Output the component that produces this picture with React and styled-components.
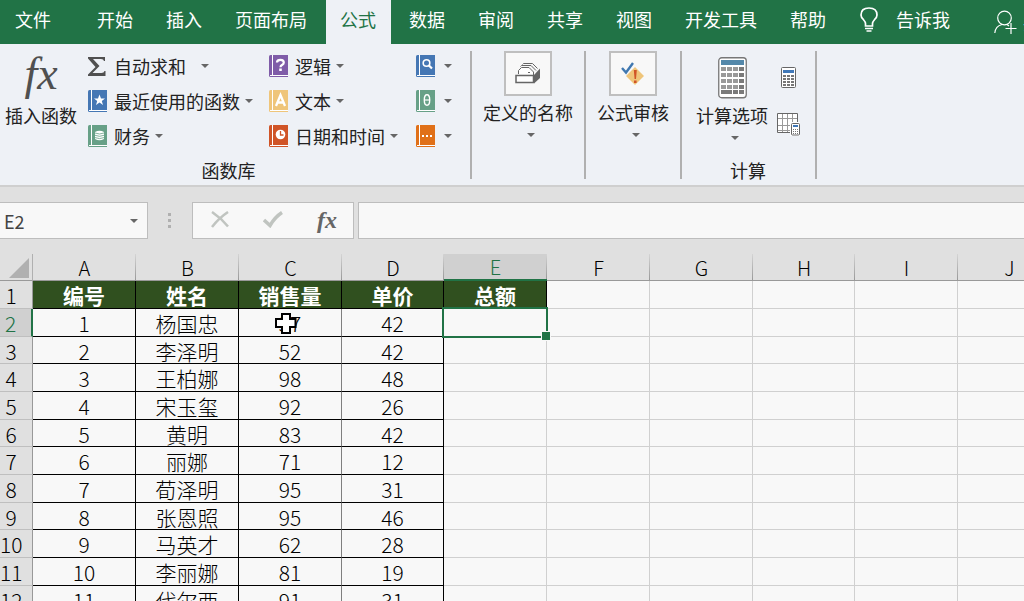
import React, { useState } from 'react';
import styled, { createGlobalStyle, css } from 'styled-components';

const GlobalStyle = createGlobalStyle`
  * {
    box-sizing: border-box;
  }
  body {
    margin: 0;
    background: #e0e0e0;
    font-family: "Noto Sans CJK SC", "Noto Sans", sans-serif;
    font-size: 18px;
    line-height: 26px;
    color: #222222;
  }
  button, input {
    font: inherit;
    color: inherit;
    padding: 0;
    border: none;
    background: none;
  }
  button {
    cursor: pointer;
  }
  svg {
    display: block;
    flex-shrink: 0;
  }
`;

const Page = styled.div`
  display: flex;
  flex-direction: column;
  height: 100vh;
  overflow: hidden;
`;

/* menu */
const MenuBar = styled.nav`
  display: flex;
  flex-shrink: 0;
  gap: 4px;
  height: 44px;
  padding-left: 1px;
  background: #217346;
  color: #ffffff;
  overflow: hidden;
`;

const MenuTab = styled.button`
  flex-shrink: 0;
  padding: 0 15px 6px 14px;
  white-space: nowrap;
  ${({ $first }) => $first && css`
    margin-right: 13px;
  `}
  ${({ $active }) => $active && css`
    background: #eef1f6;
    color: #217346;
  `}
`;

const MenuIconButton = styled.button`
  display: flex;
  flex-shrink: 0;
  align-items: center;
  gap: 18px;
  margin-left: 15px;
  padding-bottom: 6px;
  white-space: nowrap;
`;

const ShareButton = styled(MenuIconButton)`
  gap: 6px;
  margin-left: 40px;
  padding-bottom: 0;
`;

/* ribbon */
const Ribbon = styled.div`
  display: flex;
  flex-shrink: 0;
  height: 143px;
  padding: 7px 0 6px;
  background: #eef1f6;
  border-bottom: 2px solid #cfcfcf;
`;

const Group = styled.section`
  display: flex;
  flex-direction: column;
  flex-shrink: 0;
  justify-content: space-between;
  padding: ${({ $pad }) => $pad || '0 11px'};
  border-right: 2px solid #b0b0b0;
`;

const GroupBody = styled.div`
  display: flex;
  align-items: flex-start;
`;

const GroupLabel = styled.div`
  height: 22px;
  text-align: center;
`;

const BigButton = styled.button`
  display: flex;
  flex-direction: column;
  align-items: center;
  white-space: nowrap;
  padding-top: ${({ $bare }) => ($bare ? 6 : 0)}px;
`;

const BigIcon = styled.span`
  display: flex;
  align-items: center;
  justify-content: center;
  height: 42px;
  margin-bottom: 3px;
  ${({ $boxed }) => $boxed && css`
    width: 48px;
    height: 45px;
    background: #f8f8f8;
    border: 2px solid #bfbfbf;
  `}
`;

const BigFx = styled.span`
  align-self: flex-start;
  font: italic 46px/34px "Liberation Serif", serif;
  color: #505050;
`;

const Caret = styled.span`
  flex-shrink: 0;
  border: 4px solid transparent;
  border-top-color: #666666;
  border-bottom: none;
  ${({ $below }) => $below && css`
    margin-top: 8px;
    margin-left: 6px;
  `}
  ${({ $far }) => $far && css`
    margin-left: 10px;
  `}
`;

const Columns = styled.div`
  display: flex;
  gap: 16px;
  margin-left: 11px;
`;

const SmallButton = styled.button`
  display: flex;
  align-items: center;
  gap: 5px;
  height: 35px;
  padding-bottom: 5px;
  white-space: nowrap;
`;

const IconSlot = styled.span`
  display: flex;
  width: 21px;
`;

const Column = styled.div`
  display: flex;
  flex-direction: column;
  ${({ $compact }) => $compact && css`
    margin-left: 2px;
    ${SmallButton} {
      gap: 7px;
    }
  `}
`;

const ToolColumn = styled.div`
  display: flex;
  flex-direction: column;
  align-items: center;
  gap: 25px;
  margin-left: 9px;
  padding-top: 16px;
`;

/* formula bar */
const FormulaBar = styled.div`
  display: flex;
  flex-shrink: 0;
  align-items: center;
  height: 67px;
`;

const barBox = css`
  display: flex;
  align-items: center;
  height: 37px;
  background: #f8f8f8;
  border: 1px solid #bdbdbd;
`;

const NameBox = styled.div`
  ${barBox}
  width: 148px;
  padding: 0 9px 0 4px;
  border-left: none;
  color: #444444;
  input {
    flex: 1;
    min-width: 0;
    outline: none;
  }
  button {
    display: flex;
  }
`;

const Dots = styled.span`
  display: flex;
  flex-direction: column;
  gap: 3px;
  margin: 0 21px 0 20px;
  i {
    width: 3px;
    height: 3px;
    background: #b0b0b0;
  }
`;

const BarActions = styled.div`
  ${barBox}
  justify-content: space-between;
  width: 162px;
  margin-right: 4px;
  padding: 0 16px 2px 18px;
`;

const SmallFx = styled.span`
  font: italic bold 24px/28px "Liberation Serif", serif;
  color: #666666;
`;

const FormulaInput = styled.input`
  && {
    ${barBox}
    flex: 1;
    min-width: 0;
    padding: 0 8px;
    border-right: none;
    outline: none;
  }
`;

/* sheet */
const Sheet = styled.div`
  flex: 1;
  min-height: 0;
  overflow: hidden;
`;

const Table = styled.table`
  width: 100%;
  table-layout: fixed;
  border-collapse: separate;
  border-spacing: 0;
  background: #f8f8f8;
  color: #000000;
  font-size: 21px;
  line-height: 24px;
  text-align: center;
  th, td {
    padding: 1px 0 0;
    white-space: nowrap;
  }
`;

const HeadRow = styled.tr`
  height: 27px;
`;

const Row = styled.tr`
  height: ${({ $short }) => ($short ? 27 : 28)}px;
`;

const Corner = styled.th`
  background: #e0e0e0;
  border-right: 1px solid #b0b0b0;
  border-bottom: 1px solid #999999;
  svg {
    margin-left: 9px;
  }
`;

const ColHead = styled.th`
  background: linear-gradient(#d4d4d4, #999999) right / 1px 100% no-repeat #e0e0e0;
  border-bottom: 1px solid #999999;
  font-size: 20px;
  font-weight: 300;
  ${({ $active }) => $active && css`
    background-color: #d0d0d0;
    border-bottom: 2px solid #217346;
    color: #217346;
  `}
`;

const RowHead = styled.th`
  && {
    padding-right: 10px;
  }
  background: #e0e0e0;
  border-right: 1px solid #999999;
  border-bottom: 1px solid #bfbfbf;
  font-weight: 300;
  ${({ $active }) => $active && css`
    background: #d0d0d0;
    border-right: 2px solid #217346;
    color: #217346;
  `}
`;

const Cell = styled.td`
  position: relative;
  border-right: 1px solid #d0d0d0;
  border-bottom: 1px solid #d0d0d0;
  font-weight: 300;
  ${({ $filled, $soft }) => $filled && css`
    border-right-color: ${$soft ? '#7f7f7f' : '#000000'};
    border-bottom-color: #000000;
  `}
  ${({ $title }) => $title && css`
    background: #30501f;
    color: #ffffff;
    font-weight: 700;
  `}
`;

const Selection = styled.span`
  position: absolute;
  inset: -2px;
  z-index: 1;
  border: 2px solid #217346;
  pointer-events: none;
  &::after {
    content: '';
    position: absolute;
    right: -5px;
    bottom: -5px;
    width: 8px;
    height: 8px;
    background: #217346;
    border: 1px solid #f8f8f8;
  }
`;

const Pointer = styled.svg`
  position: absolute;
  top: 4px;
  left: 36px;
`;

const BookIcon = ({ color, children }) => (
  <svg width="19" height="22" viewBox="0 0 19 22">
    <path d="M1.500 0H19V22H1.500Q0 22 0 20.500V1.500Q0 0 1.500 0Z" fill={color} />
    <path d="M3.500 0V20M1 20.500H19" stroke="#ffffff" fill="none" />
    {children}
  </svg>
);

const SigmaIcon = () => (
  <svg width="18" height="19" viewBox="0 0 18 19">
    <path d="M0 0H17V4H16Q15.500 2 13 2H5L11.500 9L4.500 16H13.500Q16 16 16.500 14H17.500V19H0V17.500L7.500 10L0 1.500Z" fill="#505050" />
  </svg>
);

const StarBook = () => (
  <BookIcon color="#4577b4">
    <path d="M11.500 4.500L13 8.500H17L13.800 11L15 15L11.500 12.600L8 15L9.200 11L6 8.500H10Z" fill="#ffffff" />
  </BookIcon>
);

const MoneyBook = () => (
  <BookIcon color="#67a087">
    <path d="M7 7V14Q11.500 16.500 16 14V7Q11.500 4.500 7 7Z" fill="#ffffff" />
    <path d="M7 8Q11.500 10 16 8M7 10.300Q11.500 12.300 16 10.300M7 12.600Q11.500 14.600 16 12.600" stroke="#67a087" strokeWidth="0.800" fill="none" />
  </BookIcon>
);

const QuestionBook = () => (
  <BookIcon color="#7f5ca8">
    <path d="M8 7.500Q8 4.800 11.500 4.800Q14.800 4.800 14.800 7.500Q14.800 9 13 10Q11.500 10.800 11.500 12.200" stroke="#ffffff" strokeWidth="2.200" fill="none" />
    <rect x="10.200" y="13.500" width="2.600" height="2.500" fill="#ffffff" />
  </BookIcon>
);

const LetterBook = () => (
  <BookIcon color="#efc57a">
    <path d="M7 16L11.500 5L16 16M8.500 12.500H14.500" stroke="#ffffff" strokeWidth="2.300" fill="none" />
  </BookIcon>
);

const ClockBook = () => (
  <BookIcon color="#d05427">
    <circle cx="11.500" cy="9.500" r="4.800" fill="#ffffff" />
    <path d="M11.500 6V10H14.500" stroke="#d05427" strokeWidth="1.300" fill="none" />
  </BookIcon>
);

const SearchBook = () => (
  <BookIcon color="#4577b4">
    <circle cx="10.500" cy="8" r="3.300" stroke="#ffffff" strokeWidth="1.600" fill="none" />
    <path d="M12.500 10L16 13.500" stroke="#ffffff" strokeWidth="2.200" />
  </BookIcon>
);

const ThetaBook = () => (
  <BookIcon color="#67a087">
    <ellipse cx="11" cy="10" rx="2.700" ry="5.200" stroke="#ffffff" strokeWidth="1.400" fill="none" />
    <path d="M9 10H13" stroke="#ffffff" strokeWidth="1.200" />
  </BookIcon>
);

const MoreBook = () => (
  <BookIcon color="#e07018">
    <path d="M6 10H8V12H6ZM10 10H12V12H10ZM14 10H16V12H14Z" fill="#ffffff" />
  </BookIcon>
);

const DrawerIcon = () => (
  <svg width="26" height="22" viewBox="0 0 26 22" fill="none" stroke="#666666">
    <path d="M3.500 11V7.500L6.500 4.500H14L18.500 9V12" fill="#ffffff" />
    <path d="M5.500 3.500L6.500 2.500H16L21 7.500M7.500 1.500L8.500 0.500H17.500L22.500 5.500" />
    <path d="M19 12L25 5.500V15L19 20.500Z" fill="#666666" stroke="none" />
    <path d="M1 12.500H18.500V19.500H1Z" fill="#ffffff" strokeWidth="1.500" />
    <path d="M13 9.500H15" />
  </svg>
);

const AuditIcon = () => (
  <svg width="24" height="24" viewBox="0 0 24 24">
    <path d="M14 5L23 14L14 23L5 14Z" fill="#efc57a" />
    <path d="M1 6L5 10.500L12 1" stroke="#4078b0" strokeWidth="2.400" fill="none" />
    <path d="M12.800 8H15.800L15 17H13.600ZM13 18.500H15.600V21H13Z" fill="#d05427" />
  </svg>
);

const CalculatorIcon = () => (
  <svg width="29" height="42" viewBox="0 0 29 42">
    <rect x="0.750" y="0.750" width="27.500" height="40" rx="3" fill="#ffffff" stroke="#777777" strokeWidth="1.300" />
    <rect x="3" y="3" width="23" height="5" fill="#5488aa" />
    {[10, 16, 22, 28].map((y) => (
      <g key={y}>
        <path d={`M3 ${y}H8V${y + 4}H3ZM9 ${y}H14V${y + 4}H9ZM15 ${y}H20V${y + 4}H15Z`} fill="#999999" />
        <path d={`M21 ${y}H26V${y + 4}H21Z`} fill="#7a7a7a" />
      </g>
    ))}
    <path d="M3 33H14V37H3ZM15 33H20V37H15ZM21 33H26V37H21Z" fill="#7a7a7a" />
  </svg>
);

const CalcNowIcon = () => (
  <svg width="15" height="21" viewBox="0 0 15 21">
    <rect x="0.500" y="0.500" width="14" height="20" rx="1" fill="#ffffff" stroke="#666666" />
    <rect x="2" y="3" width="11" height="3" fill="#4078b8" />
    <path d="M2 9H13M2 12H13M2 15H13M2 18H13" stroke="#777777" strokeWidth="2" strokeDasharray="3 1" />
  </svg>
);

const CalcSheetIcon = () => (
  <svg width="23" height="23" viewBox="0 0 23 23" fill="none">
    <path d="M0.500 0.500H20.500V19.500H0.500Z" fill="#ffffff" stroke="#666666" />
    <path d="M5.500 1V19M10.500 1V19M15.500 1V19M1 5.500H20M1 12.500H20M1 17.500H20" stroke="#999999" />
    <rect x="13" y="9" width="10" height="14" fill="#ffffff" />
    <rect x="14.500" y="10.500" width="8" height="11.500" rx="1" fill="#ffffff" stroke="#666666" />
    <rect x="16" y="12" width="5" height="2" fill="#4078b8" />
    <path d="M16 16.500H21M16 18.500H21M16 20.500H21" stroke="#777777" strokeDasharray="1 1" />
  </svg>
);

const BulbIcon = () => (
  <svg width="18" height="25" viewBox="0 0 18 25" fill="none" stroke="#ffffff">
    <path d="M5.500 19V16.500Q5.500 15 3.500 12.700Q1 10.500 1 8Q1 1 9 1Q17 1 17 8Q17 10.500 14.500 12.700Q12.500 15 12.500 16.500V19Z" strokeWidth="1.700" />
    <path d="M5 21.500H13M6.500 24H11.500" strokeWidth="1.500" />
  </svg>
);

const PersonIcon = () => (
  <svg width="23" height="24" viewBox="0 0 23 24" fill="none" stroke="#ffffff" strokeWidth="1.200">
    <circle cx="10.500" cy="8" r="6.800" />
    <path d="M0.800 23Q1.500 16 8 14.500M13 14.500L15 16M17 13V24M11.500 18.500H22.500" />
  </svg>
);

const menuTabs = ['文件', '开始', '插入', '页面布局', '公式', '数据', '审阅', '共享', '视图', '开发工具', '帮助'];

const libraryColumns = [
  [
    { text: '自动求和', icon: SigmaIcon, far: true },
    { text: '最近使用的函数', icon: StarBook },
    { text: '财务', icon: MoneyBook },
  ],
  [
    { text: '逻辑', icon: QuestionBook },
    { text: '文本', icon: LetterBook },
    { text: '日期和时间', icon: ClockBook },
  ],
  [
    { label: '查找与引用', icon: SearchBook },
    { label: '数学和三角函数', icon: ThetaBook },
    { label: '其他函数', icon: MoreBook },
  ],
];

const columns = ['A', 'B', 'C', 'D', 'E', 'F', 'G', 'H', 'I', 'J'];

const rows = [
  ['编号', '姓名', '销售量', '单价', '总额'],
  ['1', '杨国忠', '57', '42'],
  ['2', '李泽明', '52', '42'],
  ['3', '王柏娜', '98', '48'],
  ['4', '宋玉玺', '92', '26'],
  ['5', '黄明', '83', '42'],
  ['6', '丽娜', '71', '12'],
  ['7', '荀泽明', '95', '31'],
  ['8', '张恩照', '95', '46'],
  ['9', '马英才', '62', '28'],
  ['10', '李丽娜', '81', '19'],
  ['11', '代尔西', '91', '31'],
];

export default function App() {
  const [activeTab, setActiveTab] = useState('公式');
  const [formula, setFormula] = useState('');

  return (
    <Page>
      <GlobalStyle />
      <MenuBar>
        {menuTabs.map((tab, i) => (
          <MenuTab
            key={tab}
            type="button"
            $first={i === 0}
            $active={tab === activeTab}
            onClick={() => setActiveTab(tab)}
          >
            {tab}
          </MenuTab>
        ))}
        <MenuIconButton type="button"><BulbIcon />告诉我</MenuIconButton>
        <ShareButton type="button"><PersonIcon />共享</ShareButton>
      </MenuBar>

      <Ribbon>
        <Group $pad="0 18px 0 5px">
          <GroupBody>
            <BigButton type="button" $bare>
              <BigIcon><BigFx>fx</BigFx></BigIcon>
              插入函数
            </BigButton>
            <Columns>
              {libraryColumns.map((column, i) => (
                <Column key={i} $compact={!column[0].text}>
                  {column.map(({ text, label, icon: Icon, far }) => (
                    <SmallButton key={text || label} type="button" aria-label={label}>
                      <IconSlot><Icon /></IconSlot>
                      {text}
                      <Caret $far={far} />
                    </SmallButton>
                  ))}
                </Column>
              ))}
            </Columns>
          </GroupBody>
          <GroupLabel>函数库</GroupLabel>
        </Group>

        <Group>
          <BigButton type="button">
            <BigIcon $boxed><DrawerIcon /></BigIcon>
            定义的名称
            <Caret $below />
          </BigButton>
        </Group>

        <Group>
          <BigButton type="button">
            <BigIcon $boxed><AuditIcon /></BigIcon>
            公式审核
            <Caret $below />
          </BigButton>
        </Group>

        <Group $pad="0 15px 0 14px">
          <GroupBody>
            <BigButton type="button" $bare>
              <BigIcon><CalculatorIcon /></BigIcon>
              计算选项
              <Caret $below />
            </BigButton>
            <ToolColumn>
              <button type="button" aria-label="开始计算"><CalcNowIcon /></button>
              <button type="button" aria-label="计算工作表"><CalcSheetIcon /></button>
            </ToolColumn>
          </GroupBody>
          <GroupLabel>计算</GroupLabel>
        </Group>
      </Ribbon>

      <FormulaBar>
        <NameBox>
          <input aria-label="名称框" defaultValue="E2" />
          <button type="button" aria-label="展开名称"><Caret /></button>
        </NameBox>
        <Dots><i /><i /><i /></Dots>
        <BarActions>
          <button type="button" aria-label="取消">
            <svg width="18" height="17" viewBox="0 0 18 17" fill="none" stroke="#c0c4c0" strokeWidth="2.500">
              <path d="M1 1Q10 7 17 15.500M17 1Q8 7 1 16" />
            </svg>
          </button>
          <button type="button" aria-label="输入">
            <svg width="20" height="17" viewBox="0 0 20 17" fill="none" stroke="#c0c4c0" strokeWidth="3.500">
              <path d="M1 9L7 14.500Q12 6 19 1.500" />
            </svg>
          </button>
          <button type="button" aria-label="插入函数"><SmallFx>fx</SmallFx></button>
        </BarActions>
        <FormulaInput
          aria-label="编辑栏"
          value={formula}
          onChange={(e) => setFormula(e.target.value)}
        />
      </FormulaBar>

      <Sheet>
        <Table>
          <colgroup>
            <col width="33" />
            {columns.map((name, i) => (
              <col key={name} width={i % 4 === 3 ? 102 : 103} />
            ))}
          </colgroup>
          <thead>
            <HeadRow>
              <Corner aria-label="全选">
                <svg width="20" height="20" viewBox="0 0 20 20"><path d="M20 0V20H0Z" fill="#b0b0b0" /></svg>
              </Corner>
              {columns.map((name) => (
                <ColHead key={name} scope="col" $active={name === 'E'}>{name}</ColHead>
              ))}
            </HeadRow>
          </thead>
          <tbody>
            {rows.map((row, r) => (
              <Row key={r} $short={r % 3 === 2}>
                <RowHead scope="row" $active={r === 1}>{r + 1}</RowHead>
                {columns.map((name, c) => (
                  <Cell
                    key={name}
                    $title={r === 0 && c < 5}
                    $filled={c < row.length}
                    $soft={r > 0 && name === 'C'}
                  >
                    {row[c]}
                    {r === 1 && name === 'E' && <Selection />}
                    {r === 1 && name === 'C' && (
                      <Pointer width="22" height="22" viewBox="0 0 22 22">
                        <path d="M7 1H15V6H20.500V14H15V20H7V14H1V6H7Z" fill="#ffffff" stroke="#000000" strokeWidth="2" />
                      </Pointer>
                    )}
                  </Cell>
                ))}
              </Row>
            ))}
          </tbody>
        </Table>
      </Sheet>
    </Page>
  );
}
